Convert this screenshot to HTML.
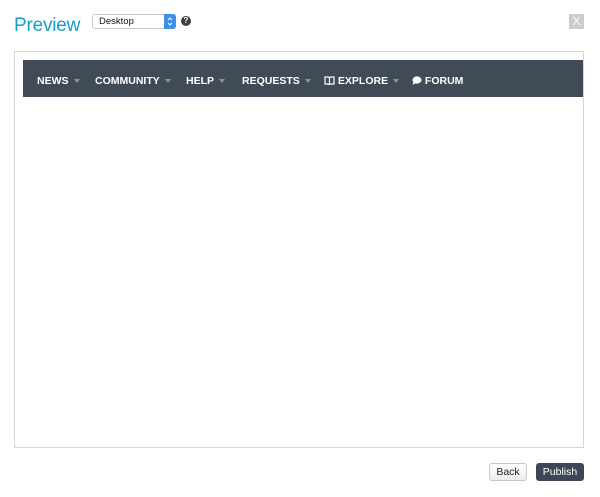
<!DOCTYPE html>
<html><head><style>
*{margin:0;padding:0;box-sizing:border-box}
body{width:600px;height:497px;background:#fff;font-family:"Liberation Sans",Arial,sans-serif;position:relative;overflow:hidden}
.abs{position:absolute}
h1{position:absolute;left:14px;top:15px;font-size:19px;font-weight:normal;color:#1a9cc8;letter-spacing:-0.2px}
.sel{left:92px;top:14px;width:84px;height:15px;border:1px solid #c8c8c8;border-radius:3px;background:#fff;font-size:9.5px;padding:1px 0 0 6px;color:#111}
.sel .arr{position:absolute;right:-1px;top:-1px;width:12px;height:15px;background:#3d8ee8;border-radius:0 3px 3px 0}
.q{left:181px;top:16px;width:10px;height:10px;border-radius:50%;background:#3a3f46;color:#fff;font-size:8px;font-weight:bold;text-align:center;line-height:10px}
.x{left:569px;top:14px;width:15px;height:15px;background:#c9ccd0;color:#fff;font-size:12px;text-align:center;line-height:15px}
.frame{left:14px;top:51px;width:570px;height:397px;border:1px solid #d6d6d6}
.nav{left:23px;top:60px;width:560px;height:37px;background:#414b57;color:#fff;font-size:10.5px;font-weight:bold}
.nav span{position:absolute;top:15px}
.tri{display:inline-block;width:0;height:0;border-left:3px solid transparent;border-right:3px solid transparent;border-top:4px solid #8c939c;margin-left:5px;vertical-align:1px}
.btn{top:463px;height:18px;border-radius:3px;font-size:10.5px;text-align:center;line-height:18px}
.back{left:489px;width:38px;border:1px solid #c8c8c8;background:linear-gradient(#fff,#ececec);color:#222;line-height:16px}
.pub{left:536px;width:48px;background:#3c4756;color:#fff}
</style></head><body>
<h1>Preview</h1>
<div class="abs sel">Desktop<div class="arr"><svg width="12" height="15"><path d="M4 6 L6 4 L8 6 M4 9 L6 11 L8 9" stroke="#fff" fill="none" stroke-width="1"/></svg></div></div>
<div class="abs q">?</div>
<div class="abs x">X</div>
<div class="abs frame"></div>
<div class="abs nav">
<span style="left:14px">NEWS<i class="tri"></i></span>
<span style="left:72px">COMMUNITY<i class="tri"></i></span>
<span style="left:163px">HELP<i class="tri"></i></span>
<span style="left:219px">REQUESTS<i class="tri"></i></span>
<span style="left:301px"><svg width="11" height="9" style="vertical-align:-1px"><path d="M1 1h3.5l1 1 1-1H10v7H6.5l-1 .8-1-.8H1z M5.5 2v6.5" stroke="#fff" fill="none" stroke-width="1.2"/></svg> EXPLORE<i class="tri"></i></span>
<span style="left:389px"><svg width="10" height="9" style="vertical-align:-1px"><ellipse cx="5" cy="4" rx="4.5" ry="3.6" fill="#fff"/><path d="M1.5 6 L0.5 9 L4 7z" fill="#fff"/></svg> FORUM</span>
</div>
<div class="abs btn back">Back</div>
<div class="abs btn pub">Publish</div>
</body></html>
